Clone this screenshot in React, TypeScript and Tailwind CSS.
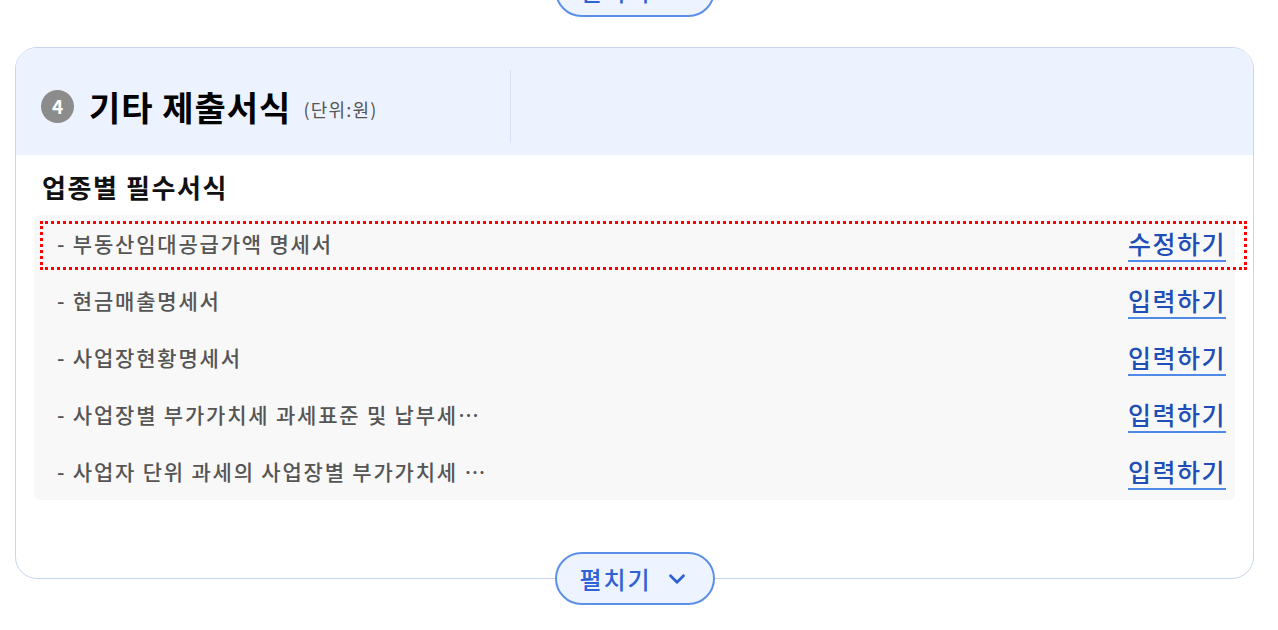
import { ChevronDown } from "lucide-react";

interface FormRow {
  id: number;
  label: string;
  action: string;
}

const rows: FormRow[] = [
  { id: 1, label: "- 부동산임대공급가액 명세서", action: "수정하기" },
  { id: 2, label: "- 현금매출명세서", action: "입력하기" },
  { id: 3, label: "- 사업장현황명세서", action: "입력하기" },
  { id: 4, label: "- 사업장별 부가가치세 과세표준 및 납부세…", action: "입력하기" },
  { id: 5, label: "- 사업자 단위 과세의 사업장별 부가가치세 …", action: "입력하기" },
];

const ExpandButton = () => (
  <button className="flex h-[53px] w-[160px] items-center justify-center gap-[12px] rounded-full border-2 border-[#5b8fe8] bg-[#eef4ff] text-[24px] font-medium tracking-[2px] text-[#2f62d6]">
    <span className="leading-none">펼치기</span>
    <ChevronDown className="h-[26px] w-[26px] text-[#2f62d6]" strokeWidth={2.6} />
  </button>
);

const App = () => {
  return (
    <div
      className="h-[630px] w-full overflow-hidden bg-white"
      style={{ fontFamily: '"Noto Sans CJK KR", "Noto Sans", sans-serif' }}
    >
      <div className="ml-[15px] mr-[24px]">
        {/* previous card's toggle, mostly scrolled out of view */}
        <div className="-mt-[36px] flex justify-center">
          <ExpandButton />
        </div>

        <div className="mt-[30px] rounded-[22px] border-[1.5px] border-[#c7d5ef]">
          <div className="flex rounded-t-[20px] bg-[#edf3fe] pb-[12px] pt-[22px]">
            <div className="flex h-[73px] w-[495px] items-center border-r border-[#d5e0f2] pl-[25px]">
              <span className="flex h-[33px] w-[33px] items-center justify-center rounded-full bg-[#8c8c8c] text-[19px] font-bold text-white">
                4
              </span>
              <h2 className="ml-[15px] text-[34px] font-bold leading-none tracking-[1px] text-black">
                기타 제출서식
              </h2>
              <span className="ml-[12px] mt-[6px] text-[18px] tracking-[1.2px] text-[#555]">(단위:원)</span>
            </div>
          </div>

          <div className="px-[18px] pt-[16px]">
            <h3 className="pl-[8px] text-[26px] font-bold leading-[32px] tracking-[1.6px] text-[#111]">
              업종별 필수서식
            </h3>
            <div className="mt-[12px] rounded-[6px] bg-[#f8f8f8]">
              {rows.map((row, i) => (
                <div key={row.id} className="relative flex h-[57px] items-center justify-between pl-[23px] pr-[9px]">
                  <span className="text-[21px] font-medium tracking-[1.8px] text-[#555]">{row.label}</span>
                  <a
                    href="#"
                    className="text-[25px] font-medium leading-none tracking-[1.5px] text-[#1f4fb6] underline decoration-[#4f8ae8] decoration-2 underline-offset-[6px]"
                  >
                    {row.action}
                  </a>
                  {i === 0 && (
                    <div className="pointer-events-none absolute bottom-[2px] left-[6px] right-[-12px] top-[6px] border-[3px] border-dotted border-[#ff0000]" />
                  )}
                </div>
              ))}
            </div>

            <div className="-mb-[27px] mt-[52px] flex justify-center">
              <ExpandButton />
            </div>
          </div>
        </div>
      </div>
    </div>
  );
};

export default App;
